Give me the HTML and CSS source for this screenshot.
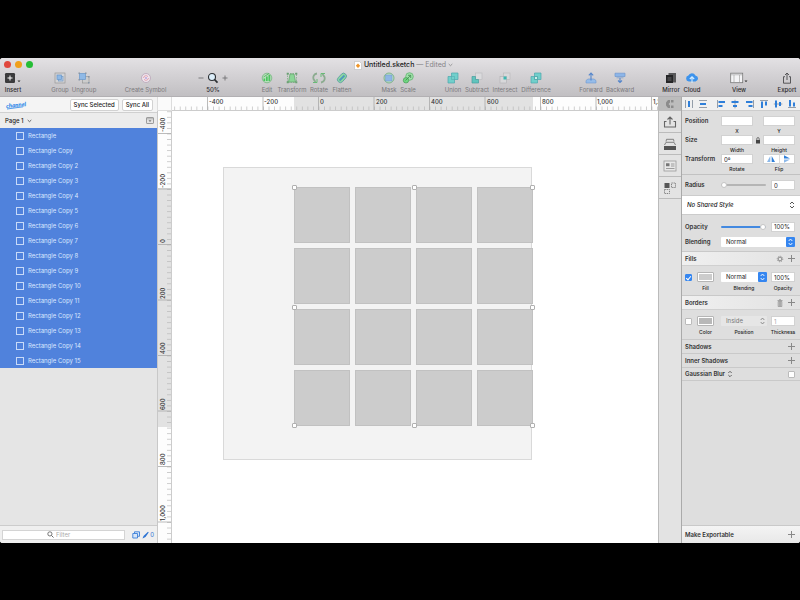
FILE: index.html
```
<!DOCTYPE html>
<html lang="en">
<head>
<meta charset="utf-8">
<title>Untitled.sketch</title>
<link rel="stylesheet" href="styles.css">
</head>
<body>
<div class="window">
  <header class="toolbar">
    <div class="titlebar">
      <div class="lights"><i class="red"></i><i class="amber"></i><i class="green"></i></div>
      <div class="title">
        <svg width="8" height="9" viewBox="0 0 8 9"><path d="M.5.5h5l2 2v6h-7z" fill="#fff" stroke="#bbb" stroke-width=".6"/><path d="M4 2.500 6.200 4.700 4 7 1.800 4.700z" fill="#f0962a"/></svg>
        <strong>Untitled.sketch</strong><span>— Edited</span>
        <svg width="5" height="4" viewBox="0 0 5 4"><path d="M.7 1l1.800 1.700L4.300 1" fill="none" stroke="#888" stroke-width=".8"/></svg>
      </div>
    </div>
    <div class="tools">
      <div class="group g-insert">
        <button class="tool dark w26"><svg width="18" height="12" viewBox="0 0 18 12"><rect x="1" y="1" width="10" height="10" rx="1.200" fill="#3b3b3d"/><path d="M6 3.500v5M3.500 6h5" stroke="#fff"/><path d="M13.500 8.500h3l-1.500 1.700z" fill="#333"/></svg><span>Insert</span></button>
      </div>
      <div class="group g-group">
        <button class="tool w24"><svg width="12" height="12" viewBox="0 0 12 12"><rect x="1" y="1" width="10" height="10" fill="#d3d3d5" stroke="#999" stroke-width=".7"/><rect x="4.500" y="4.500" width="4.500" height="4.500" fill="#b5cde6" stroke="#7499c4" stroke-width=".7"/><rect x="3" y="3" width="4.500" height="4.500" fill="#8fb9e6" stroke="#6997cb" stroke-width=".7"/></svg><span>Group</span></button>
        <button class="tool w24"><svg width="12" height="12" viewBox="0 0 12 12"><rect x="4.500" y="4.500" width="6.500" height="6.500" fill="#ccc" stroke="#999" stroke-width=".7"/><rect x="1.500" y="1.500" width="6" height="6" fill="#8fb9e6" stroke="#6997cb" stroke-width=".7"/><path d="M.5.5h1.500v1.500H.5zM7 .5h1.500v1.500H7zM.5 7h1.500v1.500H.5zM10 10h1.500v1.500H10zM10 4h1.500v1.500H10z" fill="#8796a8"/></svg><span>Ungroup</span></button>
      </div>
      <div class="group g-symbol">
        <button class="tool w41"><svg width="12" height="12" viewBox="0 0 12 12"><circle cx="6" cy="6" r="4.500" fill="#eee4ec" stroke="#b9a3b8" stroke-width=".8"/><path d="M3.500 6a2.500 2.500 0 0 1 4.500-1.300M8.500 6A2.500 2.500 0 0 1 4 7.300" fill="none" stroke="#e29aa8" stroke-width=".9"/><circle cx="6" cy="6" r="1" fill="#b7a5dd"/></svg><span>Create Symbol</span></button>
      </div>
      <div class="group g-zoom">
        <button class="tool dark w40"><svg width="30" height="12" viewBox="0 0 30 12"><path d="M.5 6h5M24.500 6h5M27 3.500v5" stroke="#737375" stroke-width=".9"/><circle cx="14" cy="5" r="3.500" fill="#dceefa" stroke="#2d3034" stroke-width="1.100"/><path d="M16.500 7.500l3 3.200" stroke="#2d3034" stroke-width="1.800"/></svg><span>50%</span></button>
      </div>
      <div class="group g-edit">
        <button class="tool w20"><svg width="12" height="12" viewBox="0 0 12 12"><circle cx="6" cy="6" r="4.800" fill="#b6dfbb" stroke="#77b482" stroke-width=".8"/><path d="M2.500 9V6.500h1.700V9M5 9V4.500h1.700V9M7.500 9V3h1.700v6" fill="#4cc55f"/><path d="M2.500 5L8 1.500" stroke="#4caf5a" stroke-width=".8"/></svg><span>Edit</span></button>
        <button class="tool w30"><svg width="12" height="12" viewBox="0 0 12 12"><path d="M2.500 10l1.500-8h4l1.500 8z" fill="#8bd596" stroke="#63a16c" stroke-width=".7"/><rect x="1.500" y="1.500" width="9" height="9" fill="none" stroke="#75a77c" stroke-width=".7" stroke-dasharray="1.500 1"/><path d="M.7.7h2v2h-2zM9.300.7h2v2h-2zM.7 9.300h2v2h-2zM9.300 9.300h2v2h-2z" fill="#6ba174"/></svg><span>Transform</span></button>
        <button class="tool w24"><svg width="14" height="12" viewBox="0 0 14 12"><path d="M5 1.500C2 2 .8 4.500 1.500 7L3.500 10M9 10.500c3-.5 4.200-3 3.500-5.500l-2-3" fill="none" stroke="#8cac90" stroke-width="1.800"/><path d="M1 10.500h4V7M13 1.500H9V5" fill="none" stroke="#5eb96d" stroke-width=".9"/></svg><span>Rotate</span></button>
        <button class="tool w22"><svg width="12" height="12" viewBox="0 0 12 12"><rect x="3" y=".7" width="5.800" height="10.500" rx="2.800" transform="rotate(42 6 6)" fill="#8ed9a0" stroke="#5a9ba5" stroke-width=".8"/><path d="M3.500 8.500l5-5" stroke="#4d99bc" stroke-width="1.800"/></svg><span>Flatten</span></button>
      </div>
      <div class="group g-mask">
        <button class="tool w20"><svg width="12" height="12" viewBox="0 0 12 12"><circle cx="6" cy="6" r="5" fill="#b9dec4" stroke="#71a97e" stroke-width=".8"/><rect x="2.500" y="3" width="6.500" height="6" fill="#8eb6e5" stroke="#7299c9" stroke-width=".5"/></svg><span>Mask</span></button>
        <button class="tool w18"><svg width="12" height="12" viewBox="0 0 12 12"><circle cx="7.500" cy="4.500" r="3.800" fill="#9ee0a8" stroke="#66b573" stroke-width=".8"/><circle cx="4" cy="8.300" r="2.700" fill="#71d781" stroke="#52a15f" stroke-width=".8"/><path d="M3.500 8.500l5-5M6 3.300h2.700V6" fill="none" stroke="#438a50" stroke-width=".8"/></svg><span>Scale</span></button>
      </div>
      <div class="group g-bool">
        <button class="tool w24"><svg width="12" height="12" viewBox="0 0 12 12"><path d="M4.500 1h6.500v6.500H7.500V11H1V4.500h3.500z" fill="#71cfcb" stroke="#4da6ad" stroke-width=".7"/><path d="M4.500 4.500h3v3h-3z" fill="none" stroke="#4699a5" stroke-width=".4"/></svg><span>Union</span></button>
        <button class="tool w24"><svg width="12" height="12" viewBox="0 0 12 12"><rect x="4.500" y="1" width="6.500" height="6.500" fill="#dbdbdd" stroke="#bababc" stroke-width=".6"/><path d="M1 4.500h3.500v3h3V11H1z" fill="#61c4bd" stroke="#479e9e" stroke-width=".7"/></svg><span>Subtract</span></button>
        <button class="tool w32"><svg width="12" height="12" viewBox="0 0 12 12"><rect x="4.500" y="1" width="6.500" height="6.500" fill="#d8d8da" stroke="#b8b8ba" stroke-width=".6"/><rect x="1" y="4.500" width="6.500" height="6.500" fill="#d8d8da" stroke="#b0b0b2" stroke-width=".6"/><path d="M4.500 4.500h3v3h-3z" fill="#3cb7b1"/></svg><span>Intersect</span></button>
        <button class="tool w30"><svg width="12" height="12" viewBox="0 0 12 12"><path d="M4.500 1h6.500v6.500H7.500V11H1V4.500h3.500z" fill="#71cfcb" stroke="#4da6ad" stroke-width=".7"/><path d="M4.500 4.500h3v3h-3z" fill="#d2eceb" stroke="#399a9c" stroke-width=".7"/></svg><span>Difference</span></button>
      </div>
      <div class="group g-order">
        <button class="tool w28"><svg width="12" height="12" viewBox="0 0 12 12"><path d="M1 8.500l2-1.500h6l2 1.500V11H1z" fill="#96bce9" stroke="#6e98d0" stroke-width=".6"/><path d="M6 1v7.500M3.800 3.300L6 1l2.200 2.300" fill="none" stroke="#5586cb" stroke-width="1.100"/></svg><span>Forward</span></button>
        <button class="tool w30"><svg width="12" height="12" viewBox="0 0 12 12"><path d="M1 1.200h10v3.300H1z" fill="#8cb5e8" stroke="#6e98d0" stroke-width=".7"/><path d="M2.500 5.800h7" stroke="#8da8cc"/><path d="M6 6v4.500M4 8.500l2 2 2-2" fill="none" stroke="#5586cb" stroke-width="1.100"/></svg><span>Backward</span></button>
      </div>
      <div class="group g-share">
        <button class="tool dark w20"><svg width="12" height="12" viewBox="0 0 12 12"><path d="M3.500 1h7.500v9.500H3.500z" fill="#58585a"/><path d="M1 3h7v8H1z" fill="#252527"/><path d="M2.500 5h4v4h-4z" fill="#454547"/></svg><span>Mirror</span></button>
        <button class="tool dark w22"><svg width="14" height="12" viewBox="0 0 14 12"><path d="M3.800 9.500a3 3 0 0 1-.4-5.900 3.800 3.800 0 0 1 7-.2 3.100 3.100 0 0 1 .2 6.100z" fill="#3d93ec"/><path d="M7 11V5M4.800 7L7 4.800 9.200 7" fill="none" stroke="#d5edff" stroke-width="1.100"/></svg><span>Cloud</span></button>
      </div>
      <div class="group g-view">
        <button class="tool dark w20"><svg width="18" height="12" viewBox="0 0 18 12"><rect x=".7" y="1.200" width="12" height="9.500" fill="#f4f4f6" stroke="#777" stroke-width=".8"/><path d="M1 2.800h11.500M4 3v7.500M9.500 3v7.500" stroke="#999" stroke-width=".6"/><path d="M14.500 8.500h3L16 10.200z" fill="#333"/></svg><span>View</span></button>
      </div>
      <div class="group g-export">
        <button class="tool dark w20"><svg width="10" height="12" viewBox="0 0 10 12"><path d="M3 4.700H1.500v6.500h7V4.700H7" fill="none" stroke="#4b4b4d" stroke-width=".9"/><path d="M5 8V1M3 3l2-2 2 2" fill="none" stroke="#4b4b4d" stroke-width=".9"/></svg><span>Export</span></button>
      </div>
    </div>
  </header>

  <div class="main">
    <aside class="sidebar">
      <div class="sync">
        <svg class="logo" width="24" height="12" viewBox="0 0 24 12"><text x="1" y="8" transform="rotate(-6 12 6)">channel</text><path d="M2 10L18 7.800" stroke="#2b86e8" stroke-width=".8"/></svg>
        <button>Sync Selected</button><button>Sync All</button>
      </div>
      <div class="page">
        <button class="page-name">Page 1 <svg width="5" height="4" viewBox="0 0 5 4"><path d="M.7 1l1.800 1.700L4.300 1" fill="none" stroke="#444" stroke-width=".8"/></svg></button>
        <button aria-label="Toggle page list"><svg width="8" height="7" viewBox="0 0 8 7"><rect x=".5" y=".5" width="7" height="6" rx=".6" fill="#e4e4e4" stroke="#888" stroke-width=".8"/><path d="M.5 1.800h7" stroke="#888" stroke-width=".6"/><path d="M2.500 3.200h3L4 5z" fill="#777"/></svg></button>
      </div>
      <ul class="layers">
        <li>Rectangle</li><li>Rectangle Copy</li><li>Rectangle Copy 2</li><li>Rectangle Copy 3</li>
        <li>Rectangle Copy 4</li><li>Rectangle Copy 5</li><li>Rectangle Copy 6</li><li>Rectangle Copy 7</li>
        <li>Rectangle Copy 8</li><li>Rectangle Copy 9</li><li>Rectangle Copy 10</li><li>Rectangle Copy 11</li>
        <li>Rectangle Copy 12</li><li>Rectangle Copy 13</li><li>Rectangle Copy 14</li><li>Rectangle Copy 15</li>
      </ul>
      <div class="filter">
        <div class="search"><svg width="7" height="7" viewBox="0 0 7 7"><circle cx="2.900" cy="2.900" r="2.100" fill="none" stroke="#555" stroke-width=".8"/><path d="M4.500 4.500l2 2" stroke="#555" stroke-width=".9"/></svg><input type="text" placeholder="Filter" aria-label="Filter"></div>
        <button aria-label="Show slices"><svg width="8" height="8" viewBox="0 0 8 8"><path d="M2.500 2.200V.8h5v4.500H6M.8 2.500h4.700V7H.8z" fill="#d8e6f8" stroke="#3b7fd8" stroke-width=".9"/></svg></button>
        <button class="count"><svg width="7" height="8" viewBox="0 0 7 8"><path d="M.5 7.500L1.500 5 6 .8l.7.600L3.500 6z" fill="#2d74d4"/></svg>0</button>
      </div>
    </aside>

    <main class="editor">
      <div class="corner"></div>
      <svg class="ruler ruler-x" width="100%" height="14">
        <defs><pattern id="tx" x="35.500" width="5.550" height="14" patternUnits="userSpaceOnUse"><path d="M.3 9.500V14" stroke="#b5b5b5" stroke-width=".8"/></pattern></defs>
        <rect x="122" width="239" height="14" fill="#e2e2e2"/>
        <rect width="100%" height="14" fill="url(#tx)"/>
        <path d="M35.500 0v14M91 0v14M146.500 0v14M202 0v14M257.500 0v14M313 0v14M368.500 0v14M424 0v14M479.500 0v14" stroke="#aaa" stroke-width=".8"/>
        <g><text x="37" y="7">-400</text><text x="92" y="7">-200</text><text x="148" y="7">0</text><text x="204" y="7">200</text><text x="259" y="7">400</text><text x="315" y="7">600</text><text x="370" y="7">800</text><text x="425" y="7">1,000</text><text x="481" y="7">1,200</text></g>
      </svg>
      <svg class="ruler ruler-y" width="15" height="100%">
        <defs><pattern id="ty" y="22.500" width="15" height="5.550" patternUnits="userSpaceOnUse"><path d="M10 .3h5" stroke="#b5b5b5" stroke-width=".8"/></pattern></defs>
        <rect y="77" width="15" height="239" fill="#e2e2e2"/>
        <rect width="15" height="100%" fill="url(#ty)"/>
        <path d="M0 22.500h15M0 78h15M0 133.500h15M0 189h15M0 244.500h15M0 300h15M0 355.500h15M0 411h15" stroke="#aaa" stroke-width=".8"/>
        <path d="M.5 0v2000" stroke="#c8c8c8"/>
        <g><text transform="translate(8 21) rotate(-90)">-400</text><text transform="translate(8 77) rotate(-90)">-200</text><text transform="translate(8 132) rotate(-90)">0</text><text transform="translate(8 188) rotate(-90)">200</text><text transform="translate(8 243) rotate(-90)">400</text><text transform="translate(8 299) rotate(-90)">600</text><text transform="translate(8 354) rotate(-90)">800</text><text transform="translate(8 410) rotate(-90)">1,000</text></g>
      </svg>
      <div class="canvas">
        <div class="artboard"></div>
        <div class="selection">
          <i></i><i></i><i></i><i></i><i></i><i></i><i></i><i></i><i></i><i></i><i></i><i></i><i></i><i></i><i></i><i></i>
          <b class="nw"></b><b class="n"></b><b class="ne"></b><b class="w"></b><b class="e"></b><b class="sw"></b><b class="s"></b><b class="se"></b>
        </div>
      </div>
    </main>

    <nav class="strip" aria-label="Plugins">
      <button class="strip-head" aria-label="Craft"><svg width="10" height="10" viewBox="0 0 10 10"><path d="M5 1H3L1 3.500v3L3 9h2V6.500L3.500 5 5 3.500zM6 1h2.500v2.500H6zM6 6.500h2.500V9H6z" fill="#8b8b8b"/></svg></button>
      <button aria-label="Share"><svg width="14" height="14" viewBox="0 0 14 14"><path d="M3.500 6.500H1.500v5.500h11V6.500h-2M7 9.500V2M4.500 4.500L7 2l2.500 2.500" fill="none" stroke="#666" stroke-width="1.100"/></svg></button>
      <button aria-label="Stack"><svg width="14" height="14" viewBox="0 0 14 14"><path d="M1 9h12v4H1z" fill="#555"/><path d="M1.500 8L3 5.300h8L12.500 8M3 4.500l.5-2.200h7l.5 2.200" fill="none" stroke="#777" stroke-width=".9"/></svg></button>
      <button aria-label="Library"><svg width="14" height="14" viewBox="0 0 14 14"><rect x="1" y="2" width="12" height="10" fill="#e8e8e8" stroke="#999" stroke-width=".8"/><path d="M3 4.300h3.500v3H3z" fill="#777"/><path d="M8 5h3.500M8 7h3.500M3 9.500h8.500" stroke="#888" stroke-width=".8"/></svg></button>
      <button aria-label="Duplicate"><svg width="14" height="14" viewBox="0 0 14 14"><path d="M1.500 2h5v5h-5z" fill="#555"/><path d="M8.500 2h4v4.500h-4zM1.500 8.500h5v4h-5z" fill="none" stroke="#777" stroke-width=".9" stroke-dasharray="1.300 .8"/></svg></button>
    </nav>

    <aside class="inspector">
      <div class="align">
        <button aria-label="Distribute horizontally"><svg viewBox="0 0 10 10"><path d="M1.500 1v8M8.500 1v8" stroke="#7e8997" stroke-width=".8"/><path d="M4 2h2v6H4z" fill="#2f7fd9"/></svg></button>
        <button class="wide" aria-label="Distribute vertically"><svg viewBox="0 0 10 10"><path d="M1 1.500h8M1 8.500h8" stroke="#7e8997" stroke-width=".8"/><path d="M2 4h6v2H2z" fill="#2f7fd9"/></svg></button>
        <button aria-label="Align left"><svg viewBox="0 0 10 10"><path d="M1.500 1v8" stroke="#7e8997" stroke-width=".8"/><path d="M2.500 2h6.500v2H2.500zM2.500 6h4v2h-4z" fill="#2f7fd9"/></svg></button>
        <button aria-label="Align center"><svg viewBox="0 0 10 10"><path d="M5 .8v8.500" stroke="#7e8997" stroke-width=".8"/><path d="M1.500 2h7v2h-7zM3 6h4v2H3z" fill="#2f7fd9"/></svg></button>
        <button aria-label="Align right"><svg viewBox="0 0 10 10"><path d="M8.500 1v8" stroke="#7e8997" stroke-width=".8"/><path d="M1 2h6.500v2H1zM3.500 6h4v2h-4z" fill="#2f7fd9"/></svg></button>
        <button aria-label="Align top"><svg viewBox="0 0 10 10"><path d="M1 1.500h8" stroke="#7e8997" stroke-width=".8"/><path d="M2 2.500h2V9H2zM6 2.500h2v4H6z" fill="#2f7fd9"/></svg></button>
        <button aria-label="Align middle"><svg viewBox="0 0 10 10"><path d="M.8 5h8.500" stroke="#7e8997" stroke-width=".8"/><path d="M2 1.500h2v7H2zM6 3h2v4H6z" fill="#2f7fd9"/></svg></button>
        <button aria-label="Align bottom"><svg viewBox="0 0 10 10"><path d="M1 8.500h8" stroke="#7e8997" stroke-width=".8"/><path d="M2 1h2v6.500H2zM6 3.500h2v4H6z" fill="#2f7fd9"/></svg></button>
      </div>

      <section class="geometry">
        <span class="name">Position</span><input id="px" type="text"><span></span><input id="py" type="text">
        <label class="cap c2" for="px">X</label><label class="cap c4" for="py">Y</label>
        <span class="name">Size</span><input id="sw" type="text"><svg class="lock" width="6" height="7" viewBox="0 0 6 7"><path d="M1 3h4v3.500H1z" fill="#444"/><path d="M1.800 3V1.800a1.200 1.200 0 0 1 2.400 0V3" fill="none" stroke="#555" stroke-width=".8"/></svg><input id="sh" type="text">
        <label class="cap c2" for="sw">Width</label><label class="cap c4" for="sh">Height</label>
        <span class="name">Transform</span><input id="rot" type="text" value="0º"><span></span>
        <div class="flip"><button aria-label="Flip horizontal"><svg width="10" height="8" viewBox="0 0 10 8"><path d="M4.300 1v6H1z" fill="#8db9e9"/><path d="M5.700 1v6H9z" fill="#2f7fd9"/></svg></button><button aria-label="Flip vertical"><svg width="10" height="8" viewBox="0 0 10 8"><path d="M2 .3v3.200h6z" fill="#2f7fd9"/><path d="M2 7.700V4.500h6z" fill="#8db9e9"/></svg></button></div>
        <label class="cap c2" for="rot">Rotate</label><span class="cap c4">Flip</span>
      </section>

      <section class="slide radius"><label class="name" for="rad">Radius</label><input type="range" min="0" max="100" value="0" aria-label="Radius slider"><input id="rad" type="text" value="0"></section>

      <div class="shared"><select aria-label="Shared style"><option>No Shared Style</option></select><svg width="6" height="8" viewBox="0 0 6 8"><path d="M1 3l2-2 2 2M1 5l2 2 2-2" fill="none" stroke="#444" stroke-width=".9"/></svg></div>

      <section class="appearance">
        <div class="slide"><label class="name" for="opa">Opacity</label><input class="full" type="range" min="0" max="100" value="100" aria-label="Opacity slider"><input id="opa" type="text" value="100%"></div>
        <div class="blend"><label class="name" for="bl">Blending</label><div class="select"><select id="bl"><option>Normal</option></select><svg width="9" height="10" viewBox="0 0 9 10"><path d="M2.700 4l1.800-2 1.800 2M2.700 6l1.800 2 1.800-2" fill="none" stroke="#fff" stroke-width=".9"/></svg></div></div>
      </section>

      <h2 class="head"><span>Fills</span><button aria-label="Fill settings"><svg width="8" height="8" viewBox="0 0 8 8"><circle cx="4" cy="4" r="1.900" fill="none" stroke="#888" stroke-width="1"/><circle cx="4" cy="4" r="2.800" fill="none" stroke="#888" stroke-width=".8" stroke-dasharray="1.100 1.099"/></svg></button><button class="plus" aria-label="Add fill"></button></h2>
      <section class="paint">
        <input id="f0" type="checkbox" checked aria-label="Fill enabled"><button id="fc" class="swatch"><i></i></button>
        <div class="select"><select id="fb"><option>Normal</option></select><svg width="9" height="10" viewBox="0 0 9 10"><path d="M2.700 4l1.800-2 1.800 2M2.700 6l1.800 2 1.800-2" fill="none" stroke="#fff" stroke-width=".9"/></svg></div>
        <input id="fo" type="text" value="100%">
        <label class="cap c2" for="fc">Fill</label><label class="cap c3" for="fb">Blending</label><label class="cap c4" for="fo">Opacity</label>
      </section>

      <h2 class="head"><span>Borders</span><button aria-label="Delete border"><svg width="8" height="8" viewBox="0 0 8 8"><path d="M1.500 1.500h5M3 .7h2M2.200 2.500h3.600v5H2.200zM3.400 3v4M4.600 3v4" fill="none" stroke="#888" stroke-width=".7"/></svg></button><button class="plus" aria-label="Add border"></button></h2>
      <section class="paint off">
        <input type="checkbox" aria-label="Border enabled"><button id="bc" class="swatch"><i></i></button>
        <div class="select"><select id="bp"><option>Inside</option></select><svg width="9" height="10" viewBox="0 0 9 10"><path d="M2.700 4l1.800-2 1.800 2M2.700 6l1.800 2 1.800-2" fill="none" stroke="#777" stroke-width=".8"/></svg></div>
        <input id="bt" type="text" value="1">
        <label class="cap c2" for="bc">Color</label><label class="cap c3" for="bp">Position</label><label class="cap c4" for="bt">Thickness</label>
      </section>

      <h2 class="head flat"><span>Shadows</span><button class="plus" aria-label="Add shadow"></button></h2>
      <h2 class="head flat"><span>Inner Shadows</span><button class="plus" aria-label="Add inner shadow"></button></h2>
      <h2 class="head flat last"><label for="gb">Gaussian Blur <svg width="6" height="8" viewBox="0 0 6 8"><path d="M1.300 3L3 1.300 4.700 3M1.300 5L3 6.700 4.700 5" fill="none" stroke="#444" stroke-width=".8"/></svg></label><input id="gb" type="checkbox"></h2>
      <h2 class="head export"><span>Make Exportable</span><button class="plus" aria-label="Make exportable"></button></h2>
    </aside>
  </div>
</div>
</body>
</html>
```
FILE: styles.css
```
*, *::before, *::after { box-sizing: border-box; }
body {
  margin: 0;
  padding: 58px 0 57px;
  min-height: 100vh;
  display: flex;
  background: #000;
  color: #222;
  font: 6px/8px Inter, "Liberation Sans", sans-serif;
}
button, input, select {
  font: inherit;
  color: inherit;
  margin: 0;
  padding: 0;
  border: 0;
  background: none;
  appearance: none;
  border-radius: 0;
  min-width: 0;
}
button { display: flex; align-items: center; justify-content: center; white-space: nowrap; }
svg { display: block; flex: none; }

.window {
  flex: 1;
  min-width: 0;
  display: flex;
  flex-direction: column;
  border-radius: 3px;
  overflow: hidden;
  background: #fff;
}

/* Title bar and tools */
.toolbar {
  background: linear-gradient(#e3e1e4, #d5d3d6 40%, #c1bfc2);
  border-bottom: 1px solid #b2b0b3;
  height: 39px;
}
.titlebar { position: relative; display: flex; justify-content: center; height: 14px; align-items: center; }
.lights { position: absolute; left: 4px; top: 3px; display: flex; gap: 4px; }
.lights i { width: 7px; height: 7px; border-radius: 50%; }
.red { background: #e0483e; }
.amber { background: #f0a01c; }
.green { background: #25bd35; }
.title { display: flex; align-items: center; gap: 2px; font-size: 7px; color: #858387; margin-left: 7px; }
.title strong { font-weight: 500; color: #222; }
.tools { display: flex; }
.group { display: flex; }
.g-group { margin-left: 22px; }
.g-symbol { margin-left: 29px; }
.g-zoom { margin-left: 27px; }
.g-edit { margin-left: 24px; }
.g-mask { margin-left: 26px; }
.g-bool { margin-left: 24px; }
.g-order { margin-left: 26px; }
.g-share { margin-left: auto; }
.g-view { margin-left: 26px; }
.g-export { margin-left: 28px; margin-right: 3px; }
.tool { flex-direction: column; gap: 2px; color: #7b797c; }
.tool.dark { color: #2c2a2d; font-weight: 500; }
.w18 { width: 18px; } .w20 { width: 20px; } .w22 { width: 22px; } .w24 { width: 24px; }
.w26 { width: 26px; } .w28 { width: 28px; } .w30 { width: 30px; } .w32 { width: 32px; }
.w40 { width: 40px; } .w41 { width: 41px; }

.main { flex: 1; display: grid; grid-template-columns: 157px minmax(0, 1fr) 24px 118px; }

/* Layer list */
.sidebar { display: flex; flex-direction: column; background: #e5e5e5; }
.sync { display: flex; gap: 3px; height: 16px; align-items: center; padding: 0 4px 0 5px; background: #f4f4f4; border-bottom: 1px solid #d0d0d0; }
.sync button { height: 12px; padding: 0 3px; background: #fff; border: 1px solid #d2d2d2; border-radius: 2px; color: #222; font-weight: 500; }
.logo { margin-right: auto; }
.logo text { font: italic 900 6px Lato, sans-serif; fill: #2b86e8; }
.page { display: flex; justify-content: space-between; align-items: center; height: 15px; padding: 0 3px 0 5px; background: #ececec; }
.page-name { gap: 3px; font-weight: 500; }
.layers { margin: 0; padding: 0; list-style: none; background: #5082dc; color: #dce8ff; }
.layers li { display: flex; align-items: center; gap: 4px; height: 15px; padding-left: 16px; }
.layers li::before { content: ""; width: 8px; height: 8px; border: 1px solid #c8daf8; }
.filter { margin-top: auto; display: flex; align-items: center; gap: 2px; height: 18px; padding: 0 3px 0 2px; background: #efefef; border-top: 1px solid #ccc; color: #2d74d4; }
.search { flex: 1; display: flex; align-items: center; gap: 2px; height: 10px; padding-left: 44px; margin-right: 5px; background: #fff; border: 1px solid #d4d4d4; min-width: 0; }
.search input { flex: 1; }
.search input::placeholder { color: #aaa; opacity: 1; }
.count { gap: 1px; }

/* Rulers and canvas */
.editor { display: grid; grid-template: 14px 1fr / 15px minmax(0, 1fr); }
.corner { background: #fafafa; border: 1px solid #ddd; border-top: 0; }
.ruler { background: #fdfdfd; overflow: hidden; }
.ruler text { font: 500 6px Inter, sans-serif; fill: #333; }
.ruler-x { border-bottom: 1px solid #ccc; }
.ruler-y { height: 100%; border-right: 1px solid #ccc; }
.canvas { position: relative; overflow: hidden; background: #fff; }
.artboard { position: absolute; left: 51px; top: 56px; width: 309px; height: 293px; background: #f3f3f3; border: 1px solid #d9d9d9; }
.selection { position: absolute; left: 122px; top: 76px; display: grid; grid-template-columns: repeat(4, 56px); gap: 5px; }
.selection i { height: 56px; background: #ccc; border: 1px solid #c1c1c1; }
.selection b { position: absolute; width: 5px; height: 5px; margin: -2px; background: #fff; border: 1px solid #b0b0b0; border-radius: 1px; }
.nw, .n, .ne { top: 0; }
.w, .e { top: 50%; }
.sw, .s, .se { bottom: 0; }
.nw, .w, .sw { left: 0; }
.n, .s { left: 50%; }
.ne, .e, .se { right: 0; }

/* Plugin strip */
.strip { background: #e3e3e3; border-left: 1px solid #bbb; border-right: 1px solid #aaa; }
.strip button { width: 100%; height: 22px; border-bottom: 1px solid #bbb; }
.strip .strip-head { height: 14px; background: #bcbcbc; }

/* Inspector */
.inspector { display: flex; flex-direction: column; background: #dedede; min-width: 0; }
.name { font-weight: 600; color: #333; }
.align { display: flex; justify-content: space-between; align-items: center; height: 14px; padding: 0 3px 0 2px; background: #f0f0f0; border-bottom: 1px solid #ccc; }
.align .wide { margin-right: 4px; }
.align svg { width: 10px; height: 10px; }
.inspector input[type="text"] { width: 100%; height: 10px; padding: 0 2px; background: #fff; border: 1px solid #d2d2d2; }
.cap { text-align: center; white-space: nowrap; justify-self: center; font-size: 5px; font-weight: 500; }
.c2 { grid-column: 2; }
.c3 { grid-column: 3; }
.c4 { grid-column: 4; }
.geometry { display: grid; grid-template-columns: 36px 1fr 10px 1fr; grid-template-rows: repeat(3, 10px 9px); align-items: center; padding: 5px 5px 1px 3px; border-bottom: 1px solid #c2c2c2; }
.lock { justify-self: center; }
.flip { display: flex; height: 10px; background: #fff; border: 1px solid #d2d2d2; }
.flip button { flex: 1; }
.flip button + button { border-left: 1px solid #ddd; }
.slide { display: grid; grid-template-columns: 36px 1fr 24px; align-items: center; }
.radius { height: 20px; padding: 0 5px 0 3px; }
.slide input[type="range"] { height: 8px; margin-right: 5px; }
.slide input[type="range"]::-webkit-slider-runnable-track { height: 2px; background: #b5b5b5; border-radius: 1px; }
.slide input.full::-webkit-slider-runnable-track { background: #4389e0; }
.slide input[type="range"]::-webkit-slider-thumb { appearance: none; width: 6px; height: 6px; margin-top: -2px; border-radius: 50%; background: #fff; border: 1px solid #c4c4c4; }
.shared { display: flex; align-items: center; height: 20px; padding: 0 5px; background: #fff; border-top: 1px solid #ccc; border-bottom: 1px solid #ccc; }
.shared select { flex: 1; font-style: italic; font-weight: 500; }
.appearance { display: grid; grid-template-rows: 15px 15px; padding: 4px 5px 2px 3px; }
.blend { display: grid; grid-template-columns: 36px 1fr; align-items: center; }
.select { display: flex; height: 10px; background: #fff; border-radius: 1px; min-width: 0; }
.select select { flex: 1; padding-left: 5px; }
.select svg { background: #3586f0; border-radius: 1px; }
.head { display: flex; align-items: center; gap: 4px; height: 15px; margin: 0; padding: 0 5px 0 3px; font-size: 6px; font-weight: 600; color: #333; background: linear-gradient(90deg, #f0f0f0, #e2e2e2); border-top: 1px solid #c9c9c9; border-bottom: 1px solid #d0d0d0; }
.head span, .head label { margin-right: auto; display: flex; gap: 2px; }
.plus { width: 7px; height: 7px; background: linear-gradient(#888, #888) center / 7px 1px no-repeat, linear-gradient(#888, #888) center / 1px 7px no-repeat; }
.paint { display: grid; grid-template-columns: 8px 20px 1fr 24px; grid-template-rows: 12px 9px; column-gap: 4px; align-items: center; padding: 5px 5px 3px 3px; }
.paint .cap.c2 { width: 17px; justify-self: start; }
.inspector input[type="checkbox"] { width: 7px; height: 7px; background: #fff; border: 1px solid #bbb; border-radius: 1px; }
.inspector input[type="checkbox"]:checked { background: #3586f0; border-color: #3586f0; display: grid; place-items: center; }
.inspector input[type="checkbox"]:checked::after { content: ""; width: 3px; height: 5px; border: solid #fff; border-width: 0 1px 1px 0; transform: rotate(40deg); }
.swatch { width: 17px; height: 10px; padding: 1px; background: #fff; border: 1px solid #b5b5b5; border-radius: 1px; }
.swatch i { flex: 1; height: 6px; background: #ccc; }
.off .swatch i { background: #b8b8b8; }
.off .select { background: #e6e6e6; color: #777; }
.off .select svg { background: none; }
.inspector .off input[type="text"] { color: #aaa; }
.flat { height: 14px; background: #dedede; border-bottom: 0; }
.last { border-bottom: 1px solid #c9c9c9; }
.export { height: 18px; margin-top: auto; background: linear-gradient(#f4f4f4, #e8e8e8); border-bottom: 0; }
```
